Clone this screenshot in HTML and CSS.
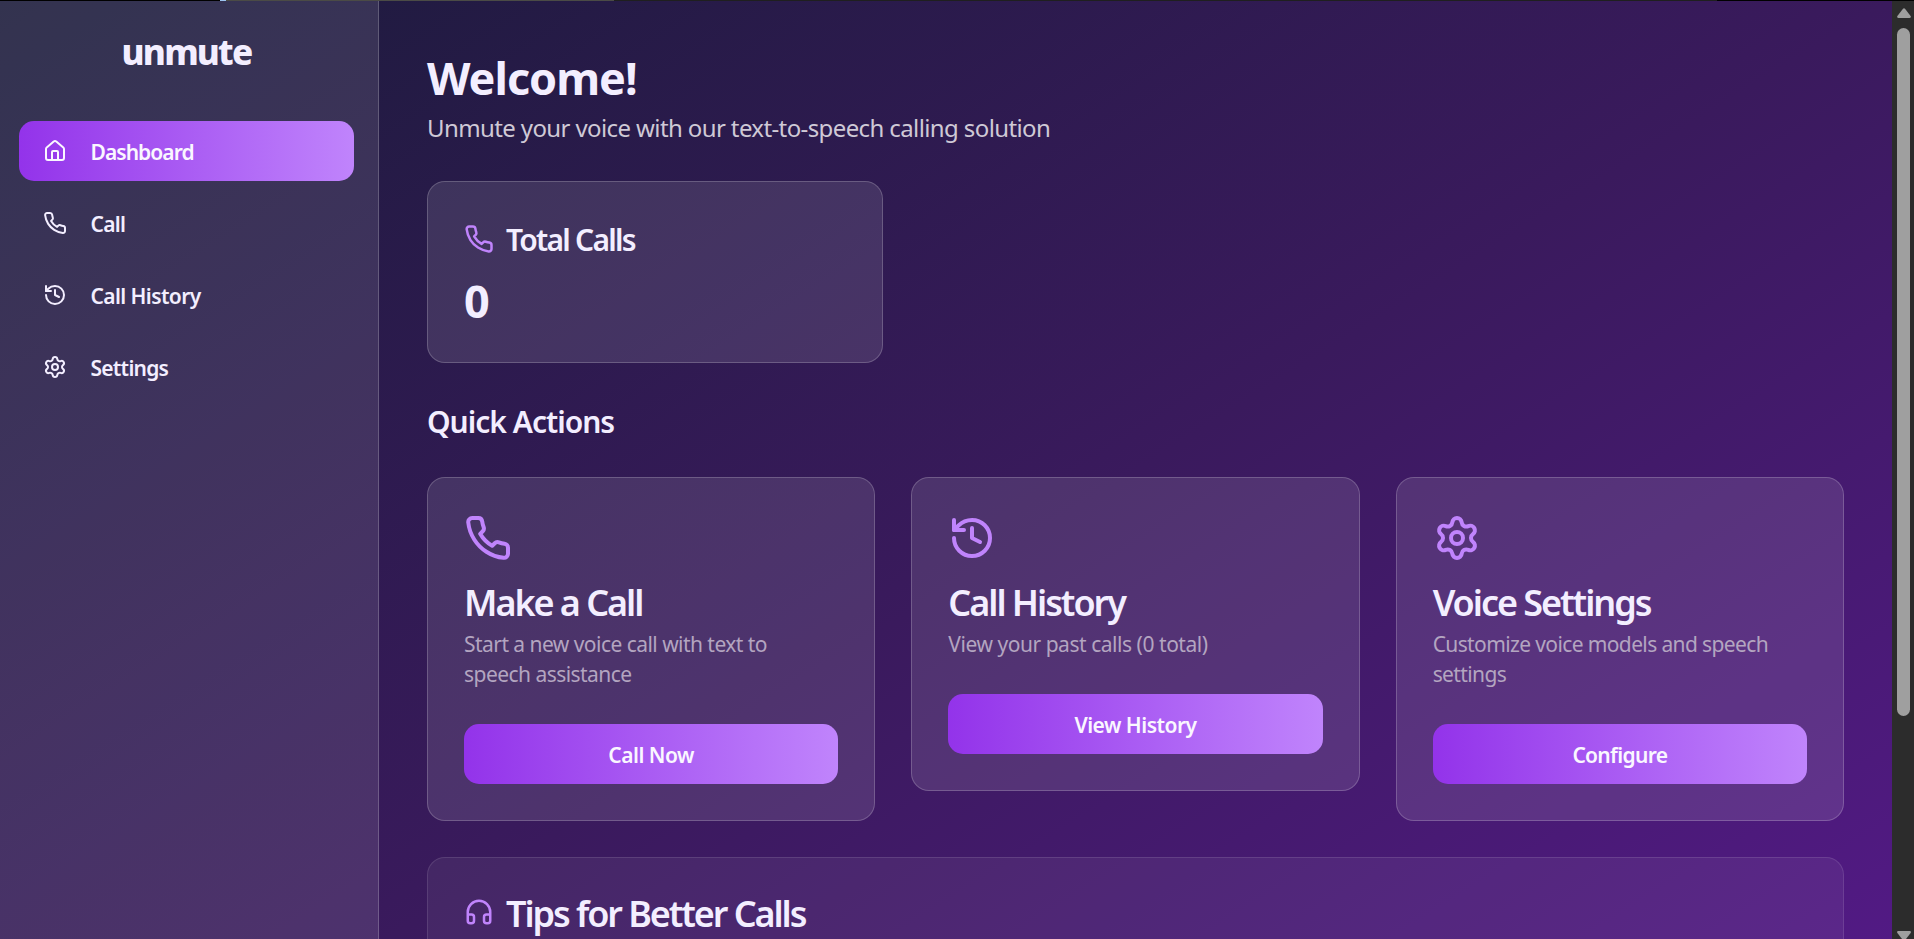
FILE: index.html
```html
<!DOCTYPE html>
<html lang="en">
<head>
<meta charset="utf-8">
<title>unmute</title>
<link rel="stylesheet" href="styles.css">
</head>
<body>
<svg class="defs" aria-hidden="true">
  <symbol id="phone" viewBox="0 0 24 24"><path d="M22 16.92v3a2 2 0 0 1-2.18 2 19.79 19.79 0 0 1-8.63-3.07 19.5 19.5 0 0 1-6-6 19.79 19.79 0 0 1-3.07-8.67A2 2 0 0 1 4.11 2h3a2 2 0 0 1 2 1.72 12.84 12.84 0 0 0 .7 2.81 2 2 0 0 1-.45 2.11L8.09 9.91a16 16 0 0 0 6 6l1.27-1.27a2 2 0 0 1 2.11-.45 12.84 12.84 0 0 0 2.81.7A2 2 0 0 1 22 16.92z"/></symbol>
  <symbol id="house" viewBox="0 0 24 24"><path d="M15 21v-8a1 1 0 0 0-1-1h-4a1 1 0 0 0-1 1v8"/><path d="M3 10a2 2 0 0 1 .709-1.528l7-5.999a2 2 0 0 1 2.582 0l7 5.999A2 2 0 0 1 21 10v9a2 2 0 0 1-2 2H5a2 2 0 0 1-2-2z"/></symbol>
  <symbol id="history" viewBox="0 0 24 24"><path d="M3 12a9 9 0 1 0 9-9 9.75 9.75 0 0 0-6.74 2.74L3 8"/><path d="M3 3v5h5"/><path d="M12 7v5l4 2"/></symbol>
  <symbol id="gear" viewBox="0 0 24 24"><path d="M9.671 4.136a2.34 2.34 0 0 1 4.659 0 2.34 2.34 0 0 0 3.319 1.915 2.34 2.34 0 0 1 2.33 4.033 2.34 2.34 0 0 0 0 3.831 2.34 2.34 0 0 1-2.33 4.033 2.34 2.34 0 0 0-3.319 1.915 2.34 2.34 0 0 1-4.659 0 2.34 2.34 0 0 0-3.32-1.915 2.34 2.34 0 0 1-2.33-4.033 2.34 2.34 0 0 0 0-3.831A2.34 2.34 0 0 1 6.35 6.051a2.34 2.34 0 0 0 3.319-1.915"/><circle cx="12" cy="12" r="3"/></symbol>
  <symbol id="headphones" viewBox="0 0 24 24"><path d="M3 14h3a2 2 0 0 1 2 2v3a2 2 0 0 1-2 2H5a2 2 0 0 1-2-2v-7a9 9 0 0 1 18 0v7a2 2 0 0 1-2 2h-1a2 2 0 0 1-2-2v-3a2 2 0 0 1 2-2h3"/></symbol>
</svg>
<div class="topline"></div>
<div class="app">
  <aside class="sidebar">
    <div class="brand"><span>unmute</span></div>
    <nav class="nav">
      <a class="nav-item active"><svg class="icon"><use href="#house"/></svg><span class="t-dashboard">Dashboard</span></a>
      <a class="nav-item"><svg class="icon"><use href="#phone"/></svg><span class="t-call">Call</span></a>
      <a class="nav-item"><svg class="icon"><use href="#history"/></svg><span class="t-history">Call History</span></a>
      <a class="nav-item"><svg class="icon"><use href="#gear"/></svg><span class="t-settings">Settings</span></a>
    </nav>
  </aside>
  <main class="main">
    <h1 class="welcome">Welcome!</h1>
    <p class="lead">Unmute your voice with our text-to-speech calling solution</p>
    <section class="card stat">
      <h3 class="stat-title"><svg class="icon"><use href="#phone"/></svg><span>Total Calls</span></h3>
      <div class="stat-value">0</div>
    </section>
    <h2 class="section-title">Quick Actions</h2>
    <section class="actions">
      <article class="card">
        <svg class="icon"><use href="#phone"/></svg>
        <h3 class="card-title">Make a Call</h3>
        <p class="desc">Start a new voice call with text to<br>speech assistance</p>
        <button class="btn t-now">Call Now</button>
      </article>
      <article class="card">
        <svg class="icon"><use href="#history"/></svg>
        <h3 class="card-title">Call History</h3>
        <p class="desc t-past">View your past calls (0 total)</p>
        <button class="btn">View History</button>
      </article>
      <article class="card">
        <svg class="icon"><use href="#gear"/></svg>
        <h3 class="card-title">Voice Settings</h3>
        <p class="desc t-models">Customize voice models and speech<br>settings</p>
        <button class="btn t-configure">Configure</button>
      </article>
    </section>
    <section class="card tips">
      <h3 class="tips-title"><svg class="icon"><use href="#headphones"/></svg><span>Tips for Better Calls</span></h3>
    </section>
  </main>
  <div class="scrollbar">
    <svg class="arrow" viewBox="0 0 14 10"><path d="M6 .8a1.300 1.300 0 0 1 2 0l5.600 7.200c.6.9.2 2-1 2H1.400c-1.200 0-1.600-1.100-1-2z"/></svg>
    <div class="thumb"></div>
    <svg class="arrow down" viewBox="0 0 14 8"><path d="M1.400 0h11.200c1.200 0 1.600 1.100 1 2L9 8H5L.4 2c-.6-.9-.2-2 1-2z"/></svg>
  </div>
</div>
</body>
</html>
```
FILE: styles.css
```css
* { box-sizing: border-box; margin: 0; padding: 0; }
html, body { height: 100%; overflow: hidden; }
body {
  display: flex;
  flex-direction: column;
  font-family: "Noto Sans", "Open Sans", sans-serif;
  font-size: 21px;
  color: #f3eeff;
  background: #1a1a2e;
  white-space: nowrap;
}
.defs { display: none; }
.icon {
  display: block;
  flex: none;
  width: 24px;
  height: 24px;
  fill: none;
  stroke: currentColor;
  stroke-width: 2;
  stroke-linecap: round;
  stroke-linejoin: round;
}
.topline {
  flex: none;
  height: 1px;
  background: linear-gradient(90deg, #000 220px, #9cc4f0 220px 226px, #4b4b46 226px 614px, #1f1f1f 614px 1717px, #000 1717px);
}
.app {
  flex: 1;
  min-height: 0;
  display: flex;
  background: linear-gradient(to bottom right, #1b1b3b 0%, #3a1a5d 50%, #581a8e 100%) 0 0 / 1892px 1180px no-repeat;
}
.sidebar {
  flex: none;
  width: 379px;
  padding: 24px 24px 0 19px;
  background: rgba(255, 255, 255, .105);
  border-right: 1px solid rgba(255, 255, 255, .2);
}
.brand {
  height: 54px;
  margin-bottom: 42px;
  font-size: 35px;
  line-height: 54px;
  font-weight: 800;
  letter-spacing: -1.8px;
  text-align: center;
}
.nav { display: flex; flex-direction: column; gap: 12px; }
.nav-item {
  display: flex;
  align-items: center;
  gap: 24px;
  height: 60px;
  padding-left: 24px;
  border-radius: 15px;
  font-weight: 600;
}
.nav-item span { padding-top: 2px; margin-left: -.5px; }
.t-dashboard { letter-spacing: -.95px; }
.t-call { letter-spacing: -.7px; }
.t-history { letter-spacing: -.6px; }
.t-settings { letter-spacing: -.75px; }
.active, .btn { background: linear-gradient(90deg, #9333ea, #c084fc); }
.active { color: #faf7ff; }
.main {
  flex: 1;
  min-width: 0;
  min-height: 0;
  display: flex;
  flex-direction: column;
  padding: 47px 48px 0;
}
.welcome { font-size: 45px; line-height: 60px; font-weight: 700; letter-spacing: -1px; }
.lead { margin-top: 2px; font-size: 24px; line-height: 36px; letter-spacing: -.61px; color: #cfc9d6; }
.card {
  padding: 36px;
  border: 1px solid rgba(255, 255, 255, .2);
  border-radius: 18px;
  background: rgba(255, 255, 255, .11);
}
.card .icon { color: #c084fc; }
.stat { width: 456px; height: 182px; margin-top: 35px; }
.stat-title, .tips-title { display: flex; align-items: center; gap: 12px; font-weight: 600; }
.stat-title { height: 42px; font-size: 30px; line-height: 42px; letter-spacing: -1.75px; }
.stat-title span { padding-top: 2px; }
.stat-title .icon, .tips-title .icon { width: 30px; height: 30px; }
.stat-value { margin-top: 14px; font-size: 45px; line-height: 54px; font-weight: 700; }
.section-title { margin-top: 38px; font-size: 30px; line-height: 42px; font-weight: 600; letter-spacing: -1px; }
.actions {
  display: grid;
  grid-template-columns: repeat(3, 1fr);
  gap: 36px;
  align-items: start;
  margin: 34px 0 36px;
}
.actions .icon { width: 48px; height: 48px; }
.card-title { margin-top: 21px; font-size: 36px; line-height: 40px; font-weight: 600; letter-spacing: -2.05px; }
.desc { margin-top: 6px; font-size: 21px; line-height: 30px; letter-spacing: -.54px; color: #b3a5c0; }
.t-past { letter-spacing: -.46px; }
.t-models { letter-spacing: -.62px; }
.btn {
  display: block;
  width: 100%;
  height: 60px;
  margin-top: 35px;
  padding-top: 2px;
  border: 0;
  border-radius: 15px;
  font: 600 21px "Noto Sans", sans-serif;
  letter-spacing: -.5px;
  color: #faf7ff;
}
.t-configure { letter-spacing: -.68px; }
.tips {
  flex: 1;
  min-height: 0;
  overflow: hidden;
  padding-bottom: 0;
  background: rgba(255, 255, 255, .06);
  border-color: rgba(255, 255, 255, .11);
  border-bottom: 0;
  border-radius: 18px 18px 0 0;
}
.tips-title { height: 36px; font-size: 36px; line-height: 36px; letter-spacing: -2.08px; }
.tips-title span { padding-top: 4px; }
.scrollbar {
  flex: none;
  display: flex;
  flex-direction: column;
  align-items: center;
  width: 22px;
  padding: 7px 0 0 1px;
  background: #2c2c2c;
}
.arrow { flex: none; width: 14px; height: 10px; fill: #9f9f9f; }
.thumb { flex: none; width: 13px; height: 688px; margin: 10px 0 215px; border-radius: 7px; background: #9f9f9f; }
.down { height: 8px; }
```
